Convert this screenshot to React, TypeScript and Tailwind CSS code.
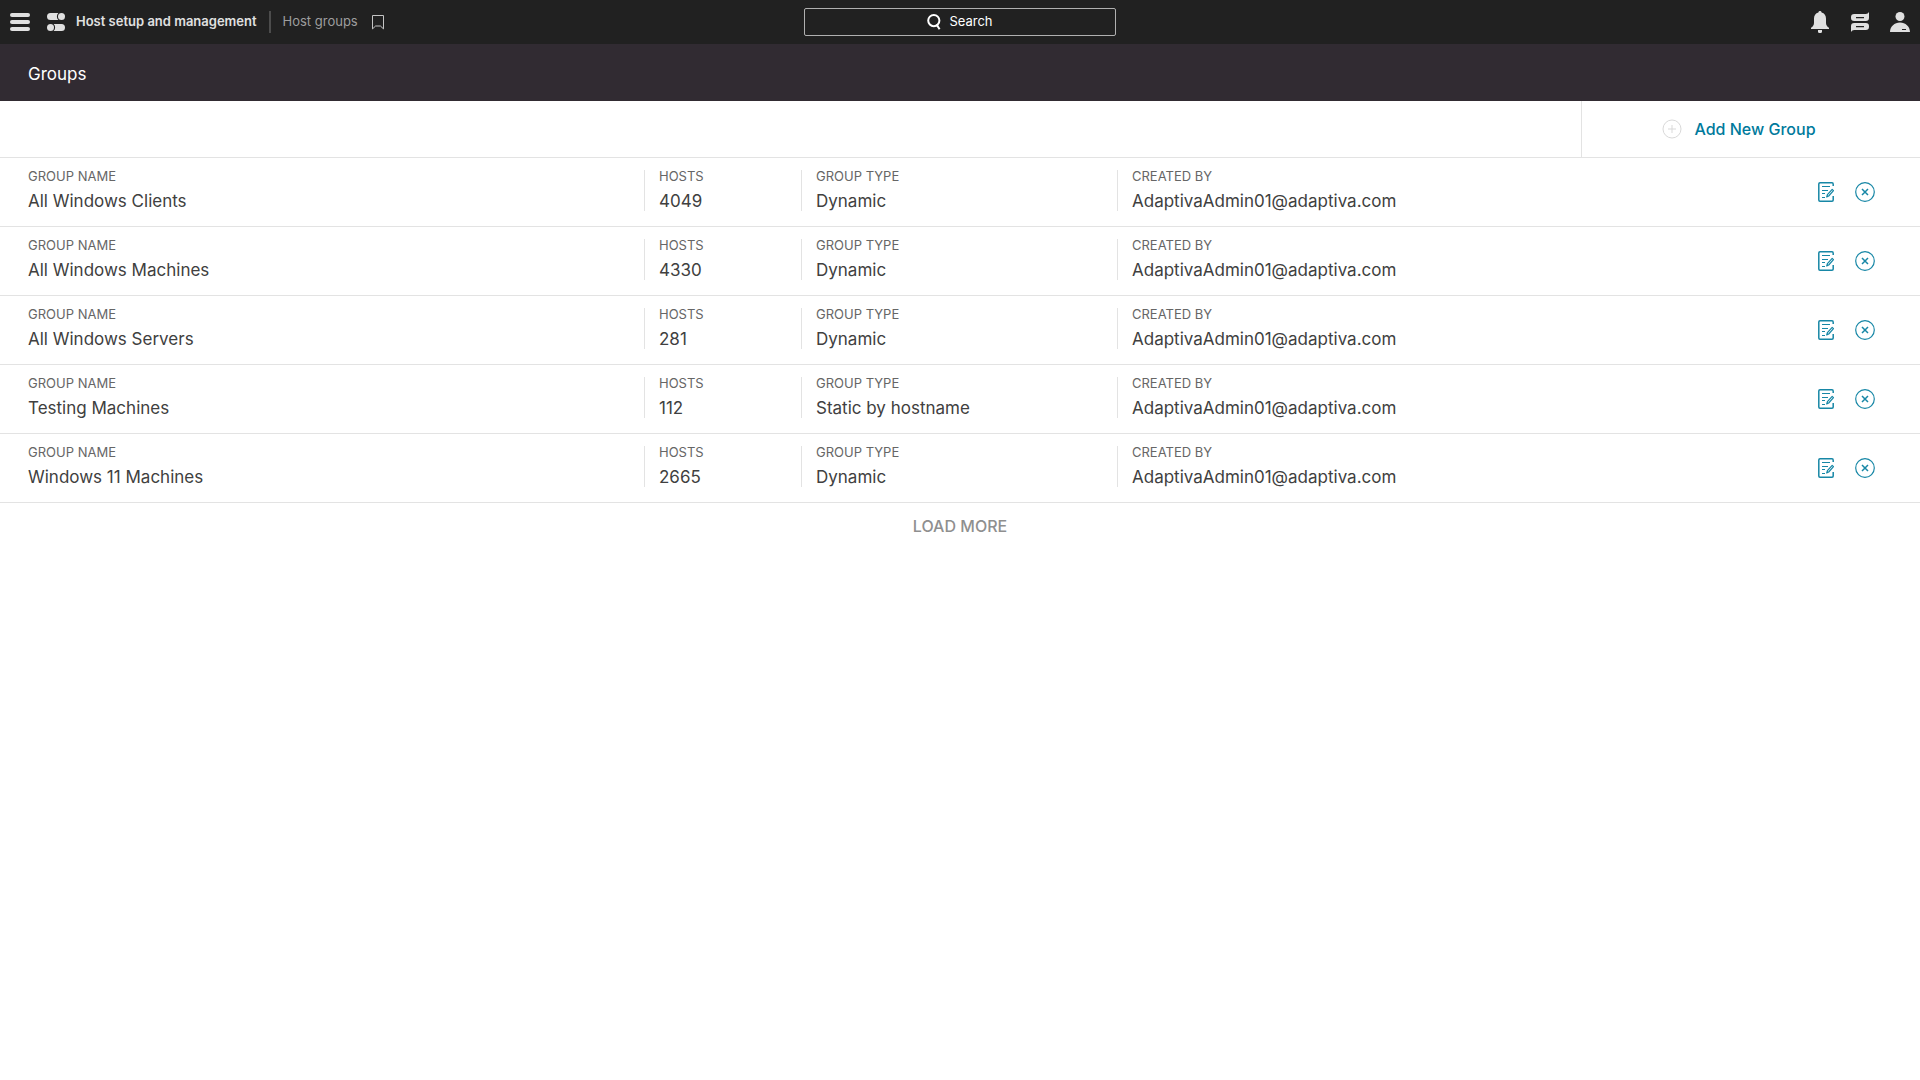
const groups = [
  { name: "All Windows Clients", hosts: 4049, type: "Dynamic", createdBy: "AdaptivaAdmin01@adaptiva.com" },
  { name: "All Windows Machines", hosts: 4330, type: "Dynamic", createdBy: "AdaptivaAdmin01@adaptiva.com" },
  { name: "All Windows Servers", hosts: 281, type: "Dynamic", createdBy: "AdaptivaAdmin01@adaptiva.com" },
  { name: "Testing Machines", hosts: 112, type: "Static by hostname", createdBy: "AdaptivaAdmin01@adaptiva.com" },
  { name: "Windows 11 Machines", hosts: 2665, type: "Dynamic", createdBy: "AdaptivaAdmin01@adaptiva.com" },
];

type Group = (typeof groups)[number];

function MenuIcon() {
  return (
    <svg width="20" height="18" viewBox="0 0 20 18" fill="currentColor" aria-hidden="true">
      <rect y="0" width="20" height="4" rx="2" />
      <rect y="7" width="20" height="4" rx="2" />
      <rect y="14" width="20" height="4" rx="2" />
    </svg>
  );
}

function AppIcon() {
  return (
    <svg width="18" height="18" viewBox="0 0 18 18" fill="currentColor" aria-hidden="true">
      <path d="M3.5 0h7.9a4.8 4.8 0 0 0 0 7H3.5a3.5 3.5 0 0 1 0-7z" />
      <circle cx="14.5" cy="3.5" r="3.5" />
      <circle cx="3.5" cy="14.5" r="3.5" />
      <path d="M14.5 11H6.6a4.8 4.8 0 0 1 0 7h7.9a3.5 3.5 0 0 0 0-7z" />
    </svg>
  );
}

function BookmarkIcon() {
  return (
    <svg width="12" height="15" viewBox="0 0 12 15" fill="none" stroke="currentColor" aria-hidden="true">
      <path d="M.5.5h11v13.4L8.4 11H3.6L.5 13.9z" />
    </svg>
  );
}

function SearchIcon() {
  return (
    <svg width="14" height="16" viewBox="0 0 14 16" fill="none" stroke="currentColor" strokeWidth="2" aria-hidden="true">
      <circle cx="6.8" cy="6.6" r="5.6" />
      <path d="M9.6 10.6l3 4.6" />
    </svg>
  );
}

function BellIcon() {
  return (
    <svg width="18" height="22" viewBox="0 0 18 22" fill="currentColor" aria-hidden="true">
      <path d="M9 0c.9 0 1.5.6 1.6 1.4C13.5 2.2 15 4.5 15 7.5V12c0 2.4 1.3 3.7 3 4.7V18H0v-1.3c1.7-1 3-2.3 3-4.7V7.5c0-3 1.5-5.300 4.400-6.100C7.500.6 8.100 0 9 0z" />
      <path d="M7 19h4v1.200a1.800 1.800 0 0 1-4 0z" />
    </svg>
  );
}

function ChatIcon() {
  return (
    <svg width="18" height="20" viewBox="0 0 18 20" fill="currentColor" aria-hidden="true">
      <path fillRule="evenodd" d="M18 0v5.8A3.2 3.2 0 0 1 14.8 9H3.2A3.2 3.2 0 0 1 0 5.8v-.6A3.2 3.2 0 0 1 3.2 2h11.6C16.3 2 17.2 1.2 18 0zM5 5v1.200h8V5z" />
      <path fillRule="evenodd" d="M0 20v-5.8A3.2 3.2 0 0 1 3.2 11h11.6a3.2 3.2 0 0 1 3.2 3.2v.6a3.2 3.2 0 0 1-3.2 3.2H3.2C1.7 18 .8 18.8 0 20zM5 14v1.200h8V14z" />
    </svg>
  );
}

function UserIcon() {
  return (
    <svg width="20" height="20" viewBox="0 0 20 20" fill="currentColor" aria-hidden="true">
      <circle cx="10" cy="4.5" r="4.5" />
      <path fillRule="evenodd" d="M0 20c.2-5.5 4.5-9.4 10-9.4S19.800 14.500 20 20zM12 17v1.100h4V17z" />
    </svg>
  );
}

function EditIcon() {
  return (
    <svg width="16" height="20" viewBox="0 0 16 20" fill="none" stroke="currentColor" aria-hidden="true">
      <path d="M15.2 4V2.2C15.2 1.300 14.800.8 14 .8H2C1.200.8.8 1.200.8 2v16c0 .8.4 1.200 1.200 1.200h12c.8 0 1.200-.4 1.200-1.200v-4" strokeWidth="1.500" />
      <path d="M4 4.500h8M4 8.500h6M4 11.500h3M4 15.500h3" strokeWidth="1.200" />
      <path d="M14.200 7.400l1.300 1.300-4.800 5.300-2 .9.700-2.200z" strokeWidth="1.200" strokeLinejoin="round" />
    </svg>
  );
}

function RemoveIcon() {
  return (
    <svg width="20" height="20" viewBox="0 0 20 20" fill="none" stroke="currentColor" aria-hidden="true">
      <circle cx="10" cy="10" r="9.300" strokeWidth="1.200" />
      <path d="M7 7l6 6M13 7l-6 6" strokeWidth="1.500" />
    </svg>
  );
}

function AddIcon() {
  return (
    <svg width="20" height="20" viewBox="0 0 20 20" fill="none" stroke="currentColor" aria-hidden="true">
      <circle cx="10" cy="10" r="9" />
      <path d="M10 6v8M6 10h8" />
    </svg>
  );
}

function Navbar() {
  return (
    <header className="grid h-11 grid-cols-[1fr_312px_1fr] items-center bg-[#212121] text-[#e0e0e0]">
      <nav className="flex items-center pl-2.5">
        <button type="button" aria-label="Menu">
          <MenuIcon />
        </button>
        <a href="#" className="ml-[17px] flex items-center gap-[11px] text-[13px] font-semibold">
          <AppIcon />
          Host setup and management
        </a>
        <span className="ml-3 h-[22px] w-0.5 bg-[#4c4c4c]" />
        <a href="#" className="ml-3 text-[13px] text-[#9e9e9e]">
          Host groups
        </a>
        <button type="button" aria-label="Bookmark" className="ml-3.5 text-[#c4c4c4]">
          <BookmarkIcon />
        </button>
      </nav>
      <button
        type="button"
        className="flex h-7 items-center justify-center gap-2 rounded-xs border border-[#b0b0b0] text-[13px] text-white"
      >
        <SearchIcon />
        Search
      </button>
      <div className="flex items-center justify-end">
        <button type="button" aria-label="Notifications" className="flex w-10 justify-center">
          <BellIcon />
        </button>
        <button type="button" aria-label="Messages" className="flex w-10 justify-center">
          <ChatIcon />
        </button>
        <button type="button" aria-label="Account" className="flex w-10 justify-center">
          <UserIcon />
        </button>
      </div>
    </header>
  );
}

function Field({ label, value }: { label: string; value: string | number }) {
  return (
    <div className="h-[41px] border-l border-[#e3e3e3] pl-3.5 first:border-l-0 first:pl-7">
      <dt className="text-[13px] leading-3 text-[#666666] uppercase">{label}</dt>
      <dd className="mt-[7px] text-[17px] leading-6 text-[#404040]">{value}</dd>
    </div>
  );
}

function GroupRow({ group }: { group: Group }) {
  return (
    <li className="flex border-b border-[#e3e3e3] pt-3 pb-[15px]">
      <dl className="grid flex-1 grid-cols-[644fr_157fr_316fr_683fr]">
        <Field label="Group name" value={group.name} />
        <Field label="Hosts" value={group.hosts} />
        <Field label="Group type" value={group.type} />
        <Field label="Created by" value={group.createdBy} />
      </dl>
      <div className="flex w-[120px] items-start gap-[21px] pt-3 pl-[18px] text-[#1787a6]">
        <button type="button" aria-label={`Edit ${group.name}`}>
          <EditIcon />
        </button>
        <button type="button" aria-label={`Remove ${group.name}`}>
          <RemoveIcon />
        </button>
      </div>
    </li>
  );
}

export default function App() {
  return (
    <div className="min-h-screen bg-white font-[Inter,'Liberation_Sans',sans-serif]">
      <Navbar />
      <div className="flex h-[57px] items-center bg-[#312b32] pt-1 pl-7">
        <h1 className="text-[17px] text-white">Groups</h1>
      </div>
      <main>
        <div className="flex h-[57px] justify-end border-b border-[#e3e3e3]">
          <button
            type="button"
            className="flex w-[339px] items-center justify-center gap-3 border-l border-[#e3e3e3] pr-6 text-base font-medium text-[#007a9c]"
          >
            <span className="text-[#d9d9d9]">
              <AddIcon />
            </span>
            Add New Group
          </button>
        </div>
        <ul>
          {groups.map((group) => (
            <GroupRow key={group.name} group={group} />
          ))}
        </ul>
        <div className="flex justify-center pt-[11px]">
          <button type="button" className="text-base font-medium text-[#8f8f8f]">
            LOAD MORE
          </button>
        </div>
      </main>
    </div>
  );
}
